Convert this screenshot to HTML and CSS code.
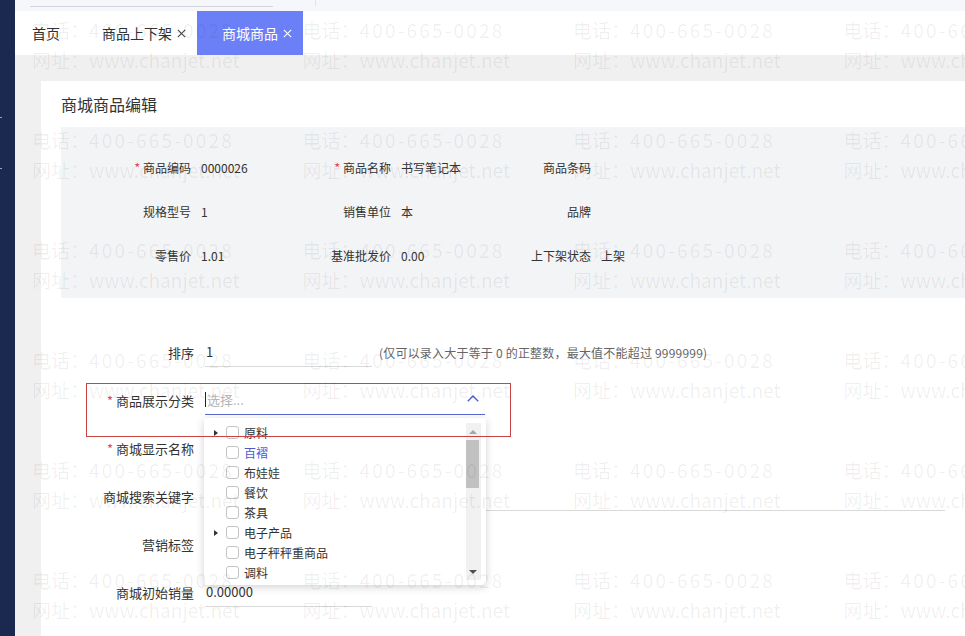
FILE: index.html
```html
<!DOCTYPE html>
<html lang="zh-CN">
<head>
<meta charset="utf-8">
<title>商城商品编辑</title>
<link rel="stylesheet" href="styles.css">
</head>
<body>
<div class="app">
  <aside class="sidebar">
    <span class="nav-mark m1"></span>
    <span class="nav-mark m2"></span>
  </aside>
  <div class="main">
    <div class="topstrip"><div class="crumb-line"></div><div class="crumb-tick"></div></div>
    <div class="tabs">
      <div class="tab tab-home">首页</div>
      <div class="tab">商品上下架<svg class="close" width="9" height="9" viewBox="0 0 9 9"><path d="M0.8 0.8 L8.2 8.2 M8.2 0.8 L0.8 8.2" stroke="#444" stroke-width="1.1" fill="none"/></svg></div>
      <div class="tab active">商城商品<svg class="close" width="9" height="9" viewBox="0 0 9 9"><path d="M0.8 0.8 L8.2 8.2 M8.2 0.8 L0.8 8.2" stroke="#fff" stroke-width="1.1" fill="none"/></svg></div>
    </div>
    <div class="content">
      <div class="card">
        <div class="card-title">商城商品编辑</div>
        <div class="info">
          <div class="cell"><span class="lbl"><span class="req">*</span> 商品编码</span><span class="val">0000026</span></div>
          <div class="cell"><span class="lbl"><span class="req">*</span> 商品名称</span><span class="val">书写笔记本</span></div>
          <div class="cell"><span class="lbl">商品条码</span><span class="val"></span></div>
          <div class="cell"><span class="lbl">规格型号</span><span class="val">1</span></div>
          <div class="cell"><span class="lbl">销售单位</span><span class="val">本</span></div>
          <div class="cell"><span class="lbl">品牌</span><span class="val"></span></div>
          <div class="cell"><span class="lbl">零售价</span><span class="val">1.01</span></div>
          <div class="cell"><span class="lbl">基准批发价</span><span class="val">0.00</span></div>
          <div class="cell"><span class="lbl">上下架状态</span><span class="val">上架</span></div>
        </div>
        <div class="form">
          <div class="row">
            <label class="flbl">排序</label>
            <div class="input w-short">1</div>
            <span class="hint">(仅可以录入大于等于 0 的正整数，最大值不能超过 9999999)</span>
          </div>
          <div class="row">
            <label class="flbl"><span class="req">*</span> 商品展示分类</label>
            <div class="select">
              <span class="caret"></span><span class="placeholder">选择...</span>
              <svg class="chev" width="12" height="7" viewBox="0 0 12 7"><polyline points="0.8,6.3 6,1 11.2,6.3" fill="none" stroke="#4f5fcf" stroke-width="1.4"/></svg>
              <div class="dropdown">
                <ul class="opts">
                  <li><span class="tri"></span><span class="cb"></span><span class="otext">原料</span></li>
                  <li><span class="tri none"></span><span class="cb"></span><span class="otext hl">百褶</span></li>
                  <li><span class="tri none"></span><span class="cb"></span><span class="otext">布娃娃</span></li>
                  <li><span class="tri none"></span><span class="cb"></span><span class="otext">餐饮</span></li>
                  <li><span class="tri none"></span><span class="cb"></span><span class="otext">茶具</span></li>
                  <li><span class="tri"></span><span class="cb"></span><span class="otext">电子产品</span></li>
                  <li><span class="tri none"></span><span class="cb"></span><span class="otext">电子秤秤重商品</span></li>
                  <li><span class="tri none"></span><span class="cb"></span><span class="otext">调料</span></li>
                </ul>
                <div class="scrollbar"><span class="sb-up"></span><span class="sb-thumb"></span><span class="sb-down"></span></div>
              </div>
            </div>
          </div>
          <div class="row">
            <label class="flbl"><span class="req">*</span> 商城显示名称</label>
            <div class="input w-mid"></div>
          </div>
          <div class="row">
            <label class="flbl">商城搜索关键字</label>
            <div class="input w-long"></div>
          </div>
          <div class="row">
            <label class="flbl">营销标签</label>
            <div class="input w-mid"></div>
          </div>
          <div class="row">
            <label class="flbl">商城初始销量</label>
            <div class="input w-short">0.00000</div>
          </div>
          <div class="highlight"></div>
        </div>
      </div>
    </div>
  </div>
</div>
<div class="watermark">
  <div class="wm"><div>电话：<span class="ph">400-665-0028</span></div><div>网址：www.chanjet.net</div></div>
  <div class="wm"><div>电话：<span class="ph">400-665-0028</span></div><div>网址：www.chanjet.net</div></div>
  <div class="wm"><div>电话：<span class="ph">400-665-0028</span></div><div>网址：www.chanjet.net</div></div>
  <div class="wm"><div>电话：<span class="ph">400-665-0028</span></div><div>网址：www.chanjet.net</div></div>
  <div class="wm"><div>电话：<span class="ph">400-665-0028</span></div><div>网址：www.chanjet.net</div></div>
  <div class="wm"><div>电话：<span class="ph">400-665-0028</span></div><div>网址：www.chanjet.net</div></div>
  <div class="wm"><div>电话：<span class="ph">400-665-0028</span></div><div>网址：www.chanjet.net</div></div>
  <div class="wm"><div>电话：<span class="ph">400-665-0028</span></div><div>网址：www.chanjet.net</div></div>
  <div class="wm"><div>电话：<span class="ph">400-665-0028</span></div><div>网址：www.chanjet.net</div></div>
  <div class="wm"><div>电话：<span class="ph">400-665-0028</span></div><div>网址：www.chanjet.net</div></div>
  <div class="wm"><div>电话：<span class="ph">400-665-0028</span></div><div>网址：www.chanjet.net</div></div>
  <div class="wm"><div>电话：<span class="ph">400-665-0028</span></div><div>网址：www.chanjet.net</div></div>
  <div class="wm"><div>电话：<span class="ph">400-665-0028</span></div><div>网址：www.chanjet.net</div></div>
  <div class="wm"><div>电话：<span class="ph">400-665-0028</span></div><div>网址：www.chanjet.net</div></div>
  <div class="wm"><div>电话：<span class="ph">400-665-0028</span></div><div>网址：www.chanjet.net</div></div>
  <div class="wm"><div>电话：<span class="ph">400-665-0028</span></div><div>网址：www.chanjet.net</div></div>
  <div class="wm"><div>电话：<span class="ph">400-665-0028</span></div><div>网址：www.chanjet.net</div></div>
  <div class="wm"><div>电话：<span class="ph">400-665-0028</span></div><div>网址：www.chanjet.net</div></div>
  <div class="wm"><div>电话：<span class="ph">400-665-0028</span></div><div>网址：www.chanjet.net</div></div>
  <div class="wm"><div>电话：<span class="ph">400-665-0028</span></div><div>网址：www.chanjet.net</div></div>
  <div class="wm"><div>电话：<span class="ph">400-665-0028</span></div><div>网址：www.chanjet.net</div></div>
  <div class="wm"><div>电话：<span class="ph">400-665-0028</span></div><div>网址：www.chanjet.net</div></div>
  <div class="wm"><div>电话：<span class="ph">400-665-0028</span></div><div>网址：www.chanjet.net</div></div>
  <div class="wm"><div>电话：<span class="ph">400-665-0028</span></div><div>网址：www.chanjet.net</div></div>
</div>
</body>
</html>
```

FILE: styles.css
```css
* { box-sizing: border-box; }
html, body {
  margin: 0;
  padding: 0;
}
body {
  width: 965px;
  height: 636px;
  overflow: hidden;
  position: relative;
  font-family: "Noto Sans CJK SC", "Noto Sans", sans-serif;
  color: #333;
  background: #f0f0f0;
}
.app {
  display: flex;
  height: 636px;
}
.sidebar {
  width: 15px;
  flex-shrink: 0;
  background: #1b2850;
  position: relative;
}
.nav-mark {
  position: absolute;
  left: 0;
  width: 2px;
  height: 1px;
  background: #9aa2bd;
}
.nav-mark.m1 { top: 117px; }
.nav-mark.m2 { top: 168px; }

.main {
  flex: 1;
  display: flex;
  flex-direction: column;
  min-width: 0;
}
.topstrip {
  height: 11px;
  background: #f6f7fa;
  display: flex;
  align-items: flex-start;
}
.crumb-line {
  margin-left: 15px;
  margin-top: 6px;
  width: 243px;
  height: 1px;
  background: #d4d5dd;
}
.crumb-tick {
  margin-left: 42px;
  width: 1px;
  height: 6px;
  background: #e2e3e9;
}
.tabs {
  height: 44px;
  background: #fff;
  display: flex;
}
.tab {
  display: flex;
  align-items: center;
  padding: 0 11px 0 25px;
  font-size: 14px;
  color: #333;
  white-space: nowrap;
}
.tab.tab-home { padding: 0 17px; }
.tab .close {
  margin-left: 5px;
  margin-top: 1px;
}
.tab.active {
  background: #6b80f7;
  color: #fff;
}

.content {
  flex: 1;
  padding: 26px 0 0 26px;
  background: #f0f0f0;
}
.card {
  background: #fff;
  height: 100%;
  padding-left: 20px;
}
.card-title {
  height: 46px;
  line-height: 46px;
  font-size: 16px;
  color: #333;
}
.info {
  background: #f3f4f6;
  padding: 18px 0 21px;
  display: grid;
  grid-template-columns: repeat(3, 200px);
  grid-auto-rows: 44px;
}
.cell {
  display: flex;
  align-items: center;
  font-size: 12px;
  white-space: nowrap;
}
.cell .lbl {
  width: 130px;
  text-align: right;
}
.cell .val {
  margin-left: 10px;
}
.req {
  color: #e5484d;
  font-size: 13px;
}

.form {
  position: relative;
  padding-top: 30px;
}
.row {
  display: flex;
  align-items: center;
  height: 48px;
}
.flbl {
  width: 133px;
  text-align: right;
  font-size: 13px;
  color: #333;
  white-space: nowrap;
  flex-shrink: 0;
}
.input {
  margin-left: 11px;
  height: 29px;
  line-height: 28px;
  border-bottom: 1px solid #d9d9d9;
  font-size: 13px;
  color: #333;
  padding-left: 1px;
  flex-shrink: 0;
}
.w-short { width: 167px; }
.w-mid { width: 280px; }
.w-long { width: 740px; }
.hint {
  margin-left: 7px;
  font-size: 12px;
  color: #666;
  white-space: nowrap;
  letter-spacing: 0.2px;
}

.select {
  position: relative;
  margin-left: 11px;
  width: 280px;
  height: 29px;
  border-bottom: 1px solid #5a67cf;
  display: flex;
  align-items: center;
  font-size: 13px;
  flex-shrink: 0;
}
.caret {
  width: 1px;
  height: 15px;
  background: #222;
  margin-right: 1px;
}
.placeholder { color: #b5b5b5; }
.chev {
  position: absolute;
  right: 6px;
  top: 9px;
}
.dropdown {
  position: absolute;
  z-index: 10;
  top: 32px;
  left: -1px;
  width: 282px;
  height: 167px;
  background: #fff;
  border-radius: 3px;
  box-shadow: 0 2px 8px rgba(0, 0, 0, 0.18);
  padding: 5px 0;
}
.opts {
  list-style: none;
  margin: 0;
  padding: 0;
}
.opts li {
  display: flex;
  align-items: center;
  height: 20px;
  padding-left: 10px;
  font-size: 12px;
  color: #333;
  white-space: nowrap;
}
.tri {
  width: 0;
  height: 0;
  border-left: 4px solid #333;
  border-top: 3px solid transparent;
  border-bottom: 3px solid transparent;
  margin-right: 8px;
}
.tri.none { border-left-color: transparent; }
.cb {
  width: 13px;
  height: 13px;
  border: 1px solid #c4c4c4;
  border-radius: 3px;
  background: #fff;
}
.otext { margin-left: 5px; }
.otext.hl { color: #4a5bd0; }
.scrollbar {
  position: absolute;
  top: 5px;
  bottom: 5px;
  right: 5px;
  width: 15px;
  background: #f1f1f1;
}
.sb-up {
  position: absolute;
  top: 7px;
  left: 3px;
  width: 0;
  height: 0;
  border-left: 4px solid transparent;
  border-right: 4px solid transparent;
  border-bottom: 4px solid #a6a6a6;
}
.sb-down {
  position: absolute;
  bottom: 6px;
  left: 3px;
  width: 0;
  height: 0;
  border-left: 4px solid transparent;
  border-right: 4px solid transparent;
  border-top: 4px solid #505050;
}
.sb-thumb {
  position: absolute;
  top: 17px;
  left: 0;
  width: 13px;
  height: 48px;
  background: #c1c1c1;
}
.highlight {
  position: absolute;
  z-index: 20;
  left: 25px;
  top: 85px;
  width: 425px;
  height: 54px;
  border: 1px solid #c94545;
  pointer-events: none;
}

.watermark {
  position: absolute;
  z-index: 100;
  top: 0;
  left: 0;
  width: 965px;
  height: 636px;
  overflow: hidden;
  pointer-events: none;
  padding: 15px 0 0 32px;
  display: grid;
  grid-template-columns: repeat(4, 270.5px);
  grid-auto-rows: 110px;
}
.wm {
  font-size: 19px;
  line-height: 30px;
  color: rgba(0, 0, 0, 0.065);
  white-space: nowrap;
}
.wm .ph { letter-spacing: 2.2px; }
```
